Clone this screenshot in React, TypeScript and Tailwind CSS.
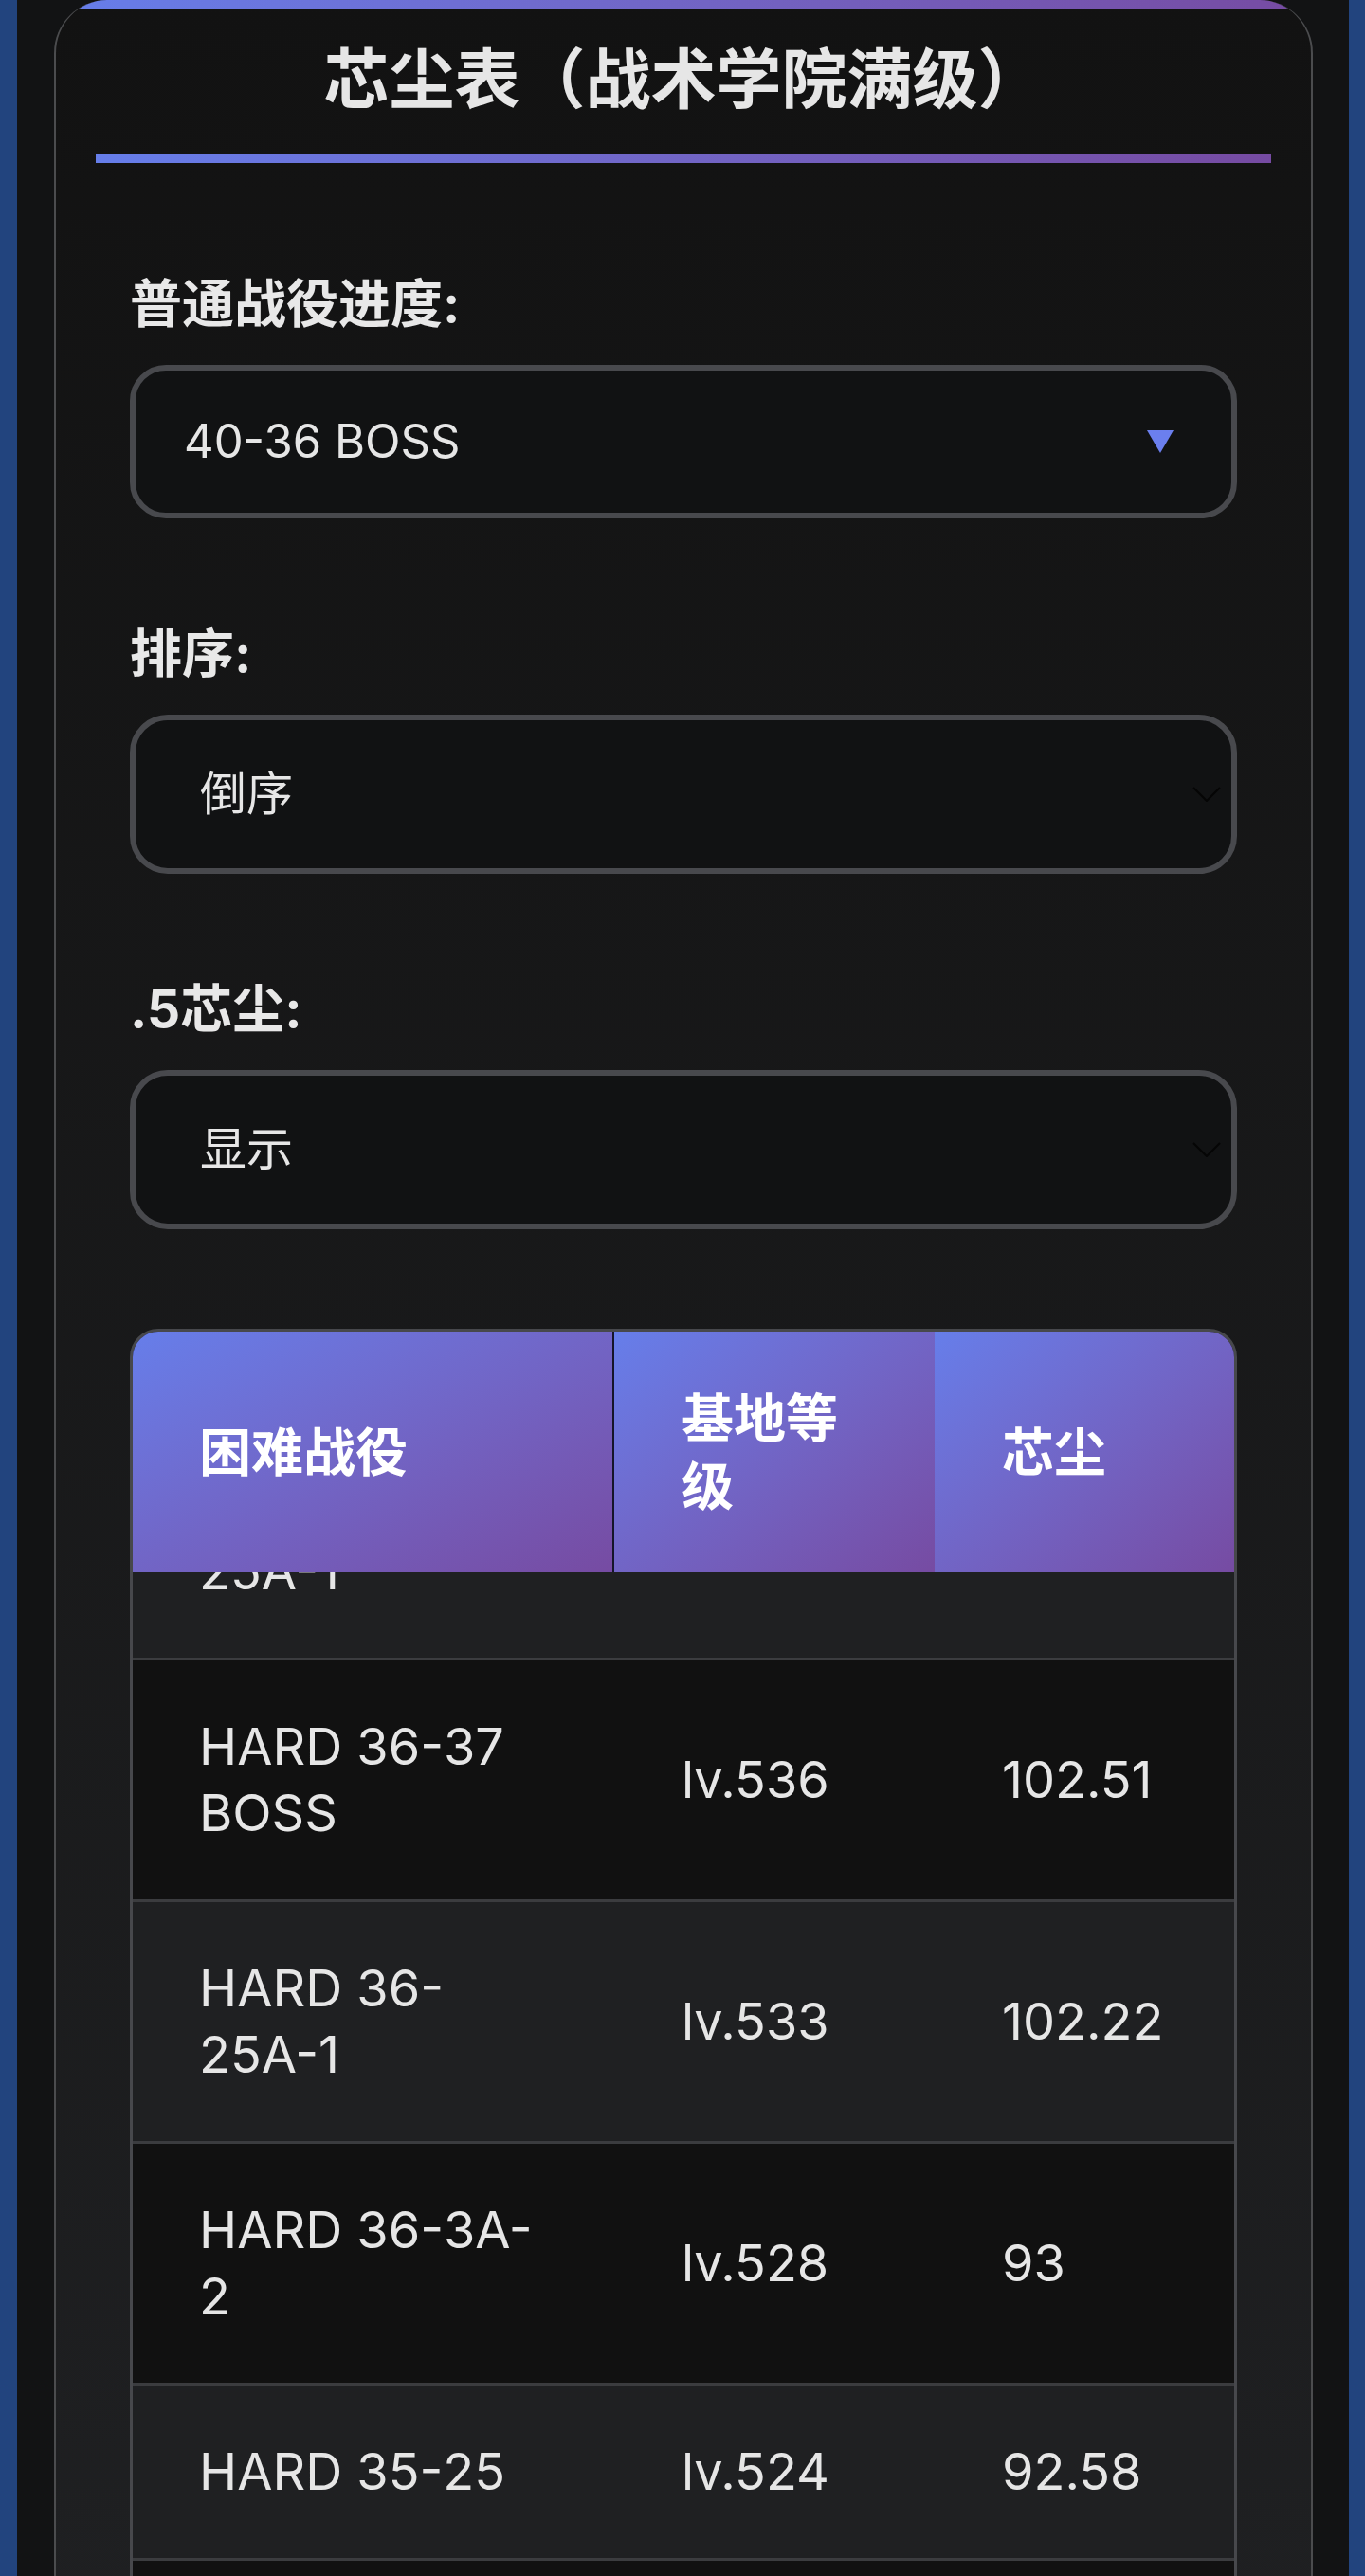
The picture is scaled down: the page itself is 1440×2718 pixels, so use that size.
import { Fragment } from "react";

const rows = [
  { name: "HARD 37-25A-1", lv: "lv.540", dust: "103.64" },
  { name: "HARD 36-37 BOSS", lv: "lv.536", dust: "102.51" },
  { name: "HARD 36-25A-1", lv: "lv.533", dust: "102.22" },
  { name: "HARD 36-3A-2", lv: "lv.528", dust: "93" },
  { name: "HARD 35-25", lv: "lv.524", dust: "92.58" },
  { name: "HARD 35-24", lv: "lv.521", dust: "92.16" },
  { name: "HARD 35-3A-1", lv: "lv.517", dust: "91.4" },
  { name: "HARD 34-37 BOSS", lv: "lv.512", dust: "90.87" },
];

// allow a break after each hyphen, like the original wraps "36-" / "25A-1"
const Name = ({ text }: { text: string }) => {
  const parts = text.split("-");
  return (
    <>
      {parts.map((p, i) => (
        <Fragment key={i}>
          {p}
          {i < parts.length - 1 && (
            <>
              -<wbr />
            </>
          )}
        </Fragment>
      ))}
    </>
  );
};

const Label = ({ children }: { children: React.ReactNode }) => (
  <div className="text-[55px] font-bold leading-[70px] text-[#e8e8e8] mb-[30px]">
    {children}
  </div>
);

const NativeSelect = ({ value }: { value: string }) => (
  <div className="h-[168px] rounded-[40px] border-[6px] border-[#48494d] bg-[#111213] flex items-center pl-[68px] pr-[11px]">
    <span className="flex-1 text-[49px] text-[#e6e6e6]">{value}</span>
    <svg width="30" height="16" viewBox="0 0 30 16" className="shrink-0">
      <path d="M1 1 L15 15 L29 1" fill="none" stroke="#050505" strokeWidth="2" />
    </svg>
  </div>
);

export default function App() {
  const cell = "py-[56px] text-[54px] leading-[70px] text-[#e6e6e6] flex items-center";
  const head =
    "py-[55px] text-[55px] leading-[72px] font-bold text-white flex items-center bg-linear-to-br from-[#667eea] to-[#764ba2]";

  return (
    <div
      className="w-[1440px] h-[2718px] overflow-hidden bg-[#22447e] pl-[18px] pr-[17px]"
      style={{ fontFamily: 'Inter, "Noto Sans CJK SC", sans-serif' }}
    >
      <div className="h-full bg-[#121314] pl-[39px] pr-[38px]">
        <div className="h-[2800px] rounded-[56px] border-2 border-t-0 border-[#4b4c4e] overflow-hidden bg-linear-to-b from-[#121212] to-[#1f2022]">
          <div className="h-[10px] bg-linear-to-r from-[#667eea] to-[#764ba2]" />
          <div className="px-[42px]">
            <h1 className="pt-[29px] pb-[33px] text-center text-[69px] font-bold leading-[90px] text-[#e6e6e6]">
              芯尘表（战术学院满级）
            </h1>
            <div className="h-[10px] bg-linear-to-r from-[#667eea] to-[#764ba2]" />

            <div className="px-[36px] pt-[113px]">
              <Label>普通战役进度:</Label>
              <div className="h-[162px] rounded-[38px] border-[6px] border-[#48494d] bg-[#111213] flex items-center pl-[51px] pr-[61px]">
                <span className="flex-1 text-[49px] text-[#e6e6e6]">40-36 BOSS</span>
                <svg width="28" height="24" viewBox="0 0 28 24" className="shrink-0">
                  <polygon points="0,0 28,0 14,24" fill="#6b7fee" />
                </svg>
              </div>

              <div className="mt-[107px]">
                <Label>排序:</Label>
                <NativeSelect value="倒序" />
              </div>

              <div className="mt-[107px]">
                <Label>.5芯尘:</Label>
                <NativeSelect value="显示" />
              </div>

              <div className="mt-[105px] rounded-t-[30px] border-[3px] border-[#47484c] overflow-hidden">
                <div
                  className="h-[1400px] overflow-y-auto [scrollbar-width:none]"
                  ref={(el) => {
                    if (el) el.scrollTop = 162;
                  }}
                >
                  <div className="sticky top-0 z-10 grid grid-cols-[506px_340px_1fr]">
                    <div className={`${head} px-[70px]`}>困难战役</div>
                    <div className={`${head} pl-[71px] pr-[70px] border-l-2 border-[#15152a]`}>基地等级</div>
                    <div className={`${head} px-[71px]`}>芯尘</div>
                  </div>
                  {rows.map((r, i) => (
                    <div
                      key={r.name}
                      className={`grid grid-cols-[506px_340px_1fr] border-b-[3px] border-[#3b3c3f] ${
                        i % 2 === 0 ? "bg-[#1f2022]" : "bg-[#111111]"
                      }`}
                    >
                      <div className={`${cell} px-[70px]`}>
                        <span>
                          <Name text={r.name} />
                        </span>
                      </div>
                      <div className={`${cell} px-[73px]`}>{r.lv}</div>
                      <div className={`${cell} px-[71px]`}>{r.dust}</div>
                    </div>
                  ))}
                </div>
              </div>
            </div>
          </div>
        </div>
      </div>
    </div>
  );
}
